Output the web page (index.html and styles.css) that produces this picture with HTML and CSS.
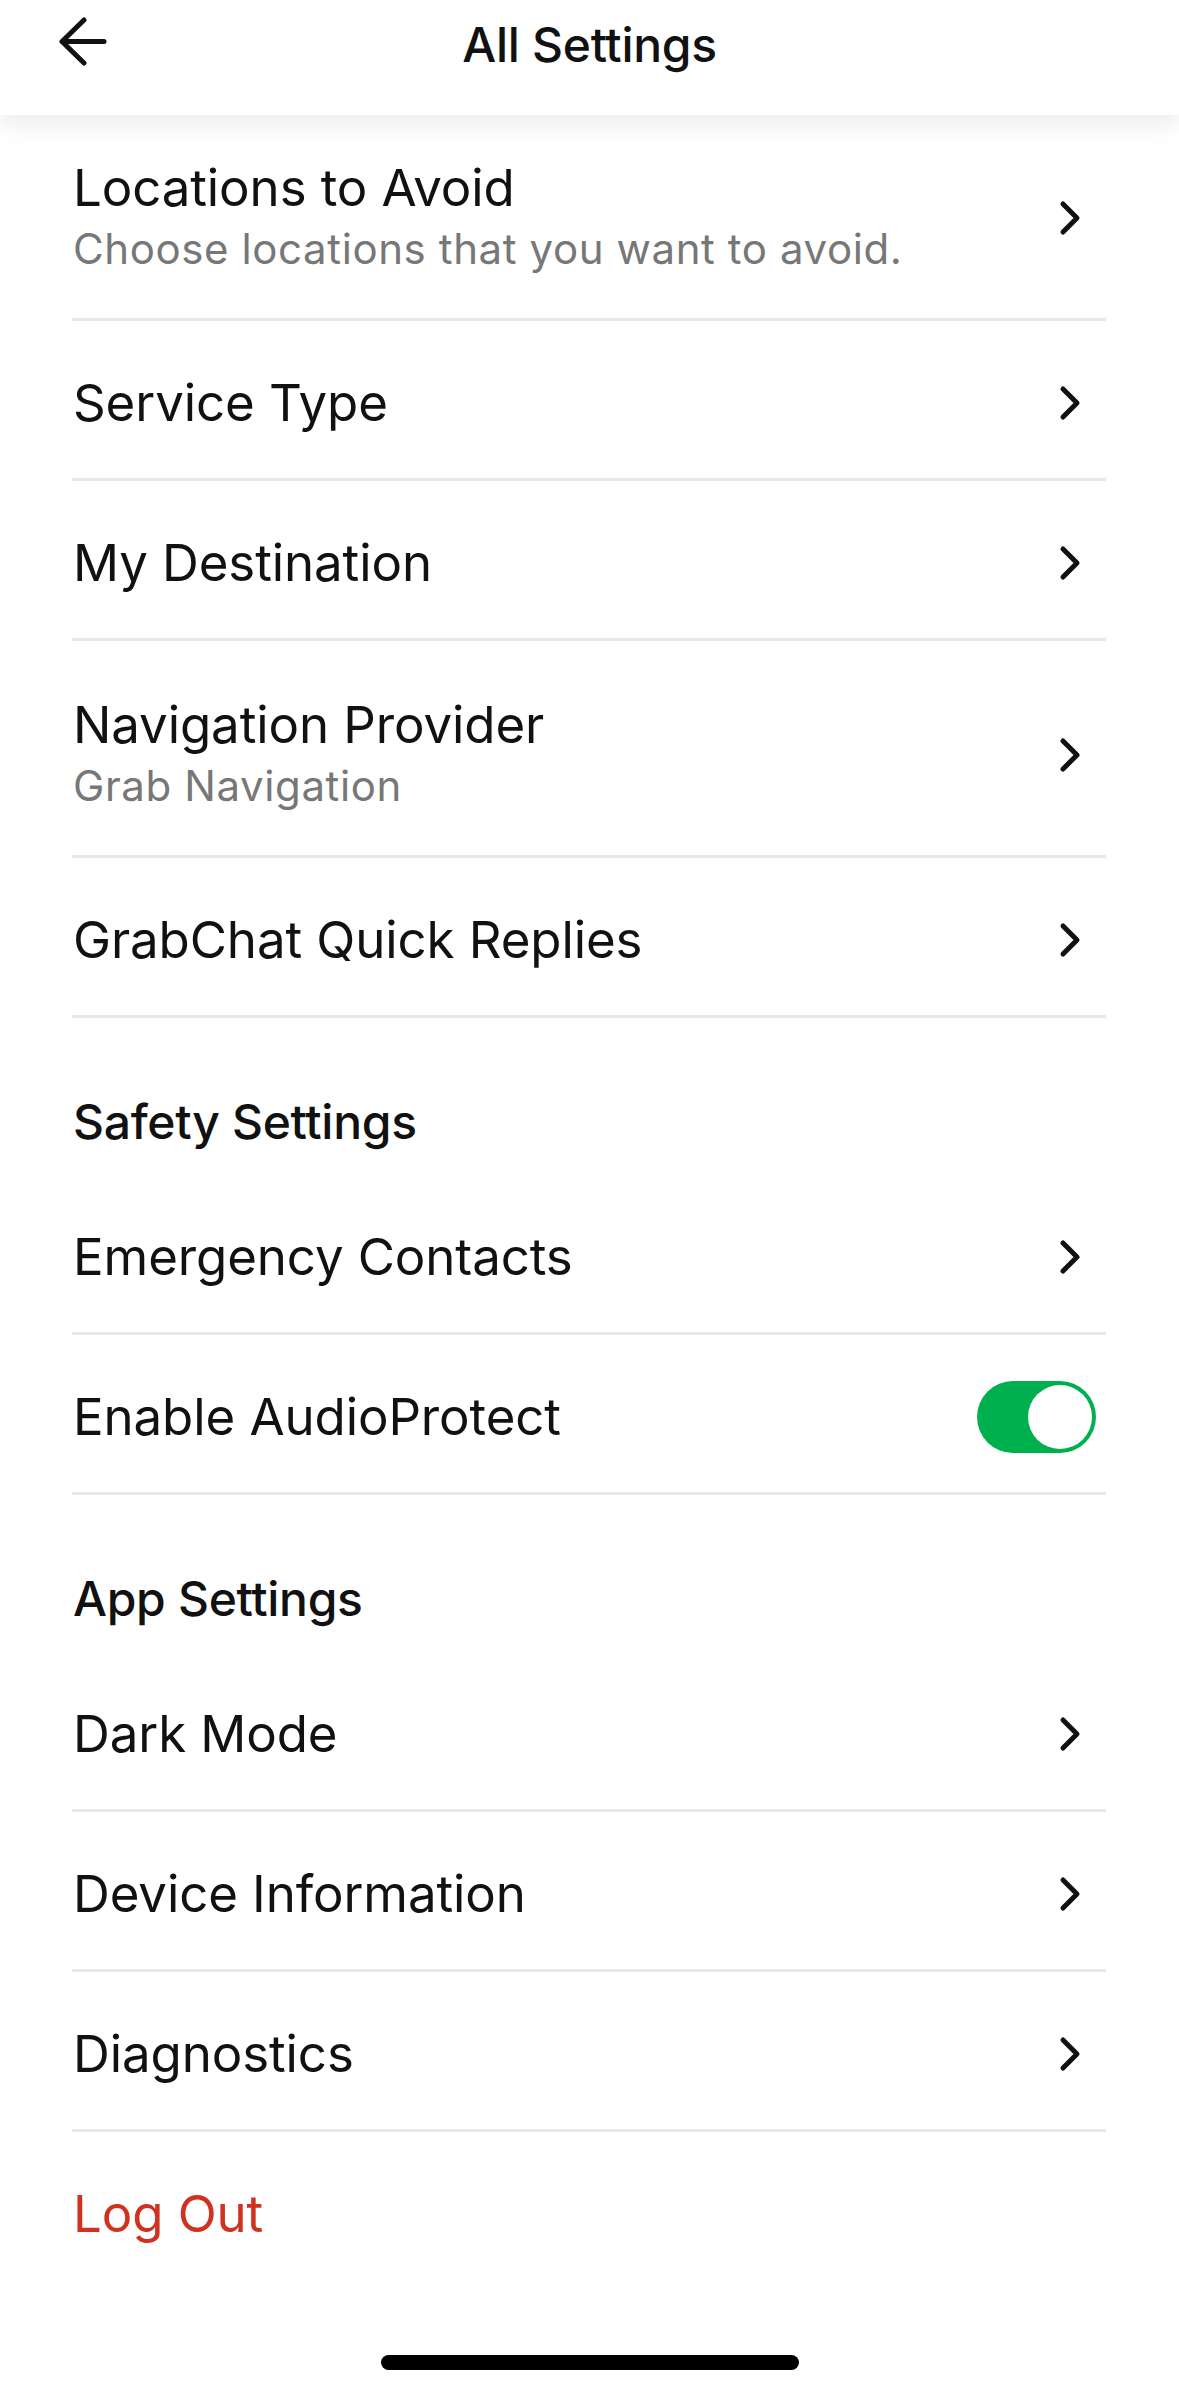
FILE: index.html
```html
<!DOCTYPE html>
<html lang="en">
<head>
<meta charset="utf-8">
<title>All Settings</title>
<link rel="stylesheet" href="styles.css">
</head>
<body>
<div class="screen">
  <header class="topbar">
    <button class="back" aria-label="Back">
      <svg width="60" height="60" viewBox="0 0 60 60" fill="none" stroke="#111" stroke-width="5" stroke-linecap="round" stroke-linejoin="round">
        <path d="M27 3 L5 24.5 L27 46 M5 24.5 H47"/>
      </svg>
    </button>
    <h1 class="title">All Settings</h1>
    <span class="spacer"></span>
  </header>

  <main class="list">
    <a class="row two first">
      <div class="label">
        <div class="name">Locations to Avoid</div>
        <div class="sub">Choose locations that you want to avoid.</div>
      </div>
      <svg class="chev" viewBox="0 0 24 36" fill="none" stroke="#111" stroke-width="5" stroke-linecap="round" stroke-linejoin="round"><path d="M5 4 L19 18 L5 32"/></svg>
    </a>
    <a class="row">
      <div class="label"><div class="name">Service Type</div></div>
      <svg class="chev" viewBox="0 0 24 36" fill="none" stroke="#111" stroke-width="5" stroke-linecap="round" stroke-linejoin="round"><path d="M5 4 L19 18 L5 32"/></svg>
    </a>
    <a class="row">
      <div class="label"><div class="name">My Destination</div></div>
      <svg class="chev" viewBox="0 0 24 36" fill="none" stroke="#111" stroke-width="5" stroke-linecap="round" stroke-linejoin="round"><path d="M5 4 L19 18 L5 32"/></svg>
    </a>
    <a class="row two">
      <div class="label">
        <div class="name">Navigation Provider</div>
        <div class="sub">Grab Navigation</div>
      </div>
      <svg class="chev" viewBox="0 0 24 36" fill="none" stroke="#111" stroke-width="5" stroke-linecap="round" stroke-linejoin="round"><path d="M5 4 L19 18 L5 32"/></svg>
    </a>
    <a class="row">
      <div class="label"><div class="name">GrabChat Quick Replies</div></div>
      <svg class="chev" viewBox="0 0 24 36" fill="none" stroke="#111" stroke-width="5" stroke-linecap="round" stroke-linejoin="round"><path d="M5 4 L19 18 L5 32"/></svg>
    </a>

    <h2 class="section">Safety Settings</h2>
    <a class="row">
      <div class="label"><div class="name">Emergency Contacts</div></div>
      <svg class="chev" viewBox="0 0 24 36" fill="none" stroke="#111" stroke-width="5" stroke-linecap="round" stroke-linejoin="round"><path d="M5 4 L19 18 L5 32"/></svg>
    </a>
    <div class="row">
      <div class="label"><div class="name">Enable AudioProtect</div></div>
      <span class="toggle on"><span class="knob"></span></span>
    </div>

    <h2 class="section">App Settings</h2>
    <a class="row">
      <div class="label"><div class="name">Dark Mode</div></div>
      <svg class="chev" viewBox="0 0 24 36" fill="none" stroke="#111" stroke-width="5" stroke-linecap="round" stroke-linejoin="round"><path d="M5 4 L19 18 L5 32"/></svg>
    </a>
    <a class="row">
      <div class="label"><div class="name">Device Information</div></div>
      <svg class="chev" viewBox="0 0 24 36" fill="none" stroke="#111" stroke-width="5" stroke-linecap="round" stroke-linejoin="round"><path d="M5 4 L19 18 L5 32"/></svg>
    </a>
    <a class="row">
      <div class="label"><div class="name">Diagnostics</div></div>
      <svg class="chev" viewBox="0 0 24 36" fill="none" stroke="#111" stroke-width="5" stroke-linecap="round" stroke-linejoin="round"><path d="M5 4 L19 18 L5 32"/></svg>
    </a>
    <a class="row last">
      <div class="label"><div class="name logout">Log Out</div></div>
    </a>
  </main>

  <footer class="home">
    <span class="indicator"></span>
  </footer>
</div>
</body>
</html>
```

FILE: styles.css
```css
* {
  box-sizing: border-box;
}

html, body {
  margin: 0;
  padding: 0;
  background: #ffffff;
}

body {
  font-family: Inter, "Noto Sans", "Liberation Sans", sans-serif;
  color: #111111;
}

.screen {
  width: 1179px;
  height: 2397px;
  display: flex;
  flex-direction: column;
  overflow: hidden;
  background: #fff;
}

.topbar {
  position: relative;
  z-index: 2;
  height: 115px;
  flex: none;
  display: grid;
  grid-template-columns: 1fr auto 1fr;
  align-items: start;
  padding: 16px 57px 0 57px;
  background: #fff;
  box-shadow: 0 10px 22px rgba(0, 0, 0, 0.075);
}

.back {
  justify-self: start;
  width: 60px;
  height: 58px;
  padding: 0;
  margin: 0;
  border: 0;
  background: none;
  display: flex;
  align-items: center;
  justify-content: flex-start;
}

.back svg {
  display: block;
  width: 60px;
  height: 60px;
  margin-top: 4px;
}

.title {
  margin: 0;
  font-size: 48px;
  line-height: 58px;
  font-weight: 500;
  letter-spacing: -0.3px;
  color: #111;
  white-space: nowrap;
}

.spacer {
  display: block;
}

.list {
  flex: none;
  display: flex;
  flex-direction: column;
  padding: 0 73px 0 72px;
}

.row {
  display: flex;
  align-items: center;
  min-height: 151px;
  padding-top: 6px;
  box-sizing: content-box;
  border-bottom: 3px solid #e7e7e7;
  color: inherit;
  text-decoration: none;
}

.row.two {
  padding: 53px 0 39px;
  min-height: 0;
}

.row.first {
  padding: 42px 0 39px;
}

.row.last {
  border-bottom: 0;
}

.label {
  flex: 1;
  min-width: 0;
  padding-left: 1px;
}

.name {
  font-size: 51px;
  line-height: 61px;
  font-weight: 400;
  letter-spacing: -0.1px;
  color: #111;
  white-space: nowrap;
}

.sub {
  font-size: 42px;
  line-height: 61px;
  font-weight: 400;
  letter-spacing: 0.6px;
  color: #777;
  white-space: nowrap;
}

.logout {
  color: #d1321f;
}

.chev {
  flex: none;
  width: 24px;
  height: 36px;
  margin-right: 24px;
}

.section {
  margin: 0;
  padding: 75px 0 24px 1px;
  font-size: 48px;
  line-height: 58px;
  font-weight: 500;
  letter-spacing: -0.3px;
  color: #111;
}

.toggle {
  flex: none;
  position: relative;
  width: 119px;
  height: 72px;
  margin-right: 10px;
  border-radius: 36px;
  background: #00b04f;
}

.toggle .knob {
  position: absolute;
  top: 4px;
  right: 4px;
  width: 64px;
  height: 64px;
  border-radius: 50%;
  background: #fff;
}

.home {
  flex: none;
  display: flex;
  justify-content: center;
  padding-top: 66px;
}

.indicator {
  display: block;
  width: 418px;
  height: 15px;
  border-radius: 8px;
  background: #000;
}
```
